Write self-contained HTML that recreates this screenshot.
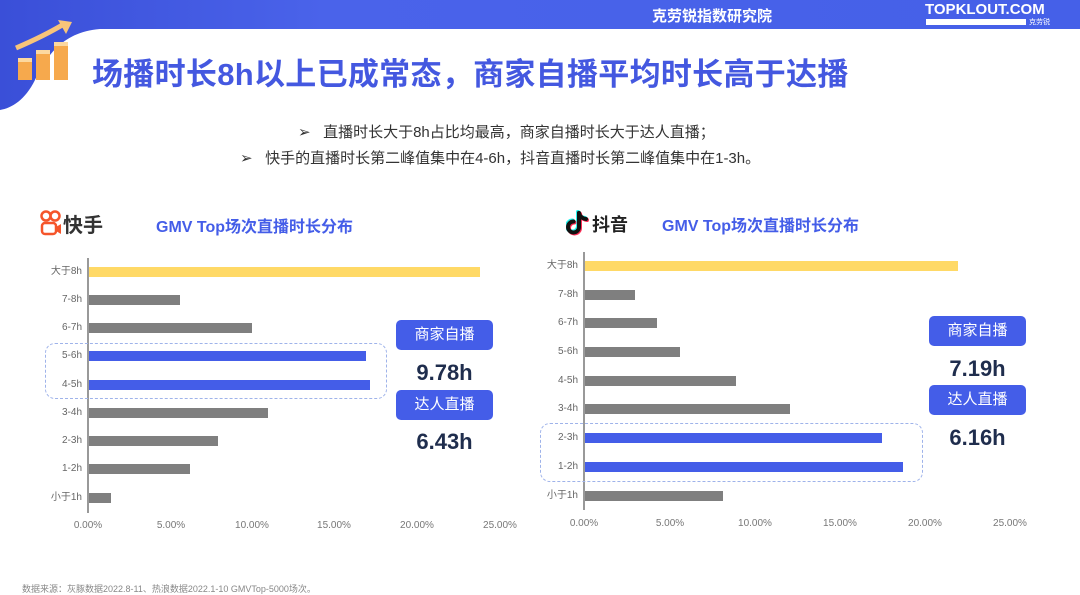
<!DOCTYPE html>
<html><head><meta charset="utf-8">
<style>
*{margin:0;padding:0;box-sizing:border-box}
body{width:1080px;height:594px;position:relative;overflow:hidden;background:#fff;font-family:"Liberation Sans","Noto Sans CJK SC",sans-serif}
.a{position:absolute}
.lbl{position:absolute;font-size:10px;color:#666;text-align:right;width:60px;line-height:12px}
.bar{position:absolute;height:10px}
.g{background:#7f7f7f}.y{background:#ffd966}.b{background:#445de8}
.tick{position:absolute;font-size:10px;color:#777;width:60px;text-align:center}
.btn{position:absolute;width:97px;height:30px;background:#445de8;border-radius:5px;color:#fff;font-size:15px;text-align:center;line-height:30px}
.num{position:absolute;width:97px;text-align:center;font-size:22px;font-weight:bold;color:#1f2d4d}
.dash{position:absolute;border:1.5px dashed #9fb3ea;border-radius:10px}
.ct{position:absolute;font-size:16px;font-weight:bold;color:#445de8}
</style></head><body>
<svg class="a" style="left:0;top:0" width="1080" height="120">
<defs><linearGradient id="gr" x1="0" y1="0" x2="1" y2="0"><stop offset="0" stop-color="#3a4fd8"/><stop offset="0.3" stop-color="#4a63ea"/><stop offset="1" stop-color="#4560e8"/></linearGradient></defs>
<path d="M0 0H1080V29H100C60 32 45 60 35 80C25 100 12 108 0 110Z" fill="url(#gr)"/>
</svg>
<div class="a" style="left:652px;top:5px;color:#fff;font-weight:bold;font-size:15px">克劳锐指数研究院</div>
<div class="a" style="left:925px;top:1px;color:#fff;font-weight:bold;font-size:15px">TOPKLOUT.COM</div>
<div class="a" style="left:926px;top:19px;width:100px;height:6px;background:#fff"></div>
<div class="a" style="left:1029px;top:17px;color:#fff;font-size:7px">克劳锐</div>
<svg class="a" style="left:14px;top:18px" width="60" height="64">
<path d="M2 30 Q30 18 50 6" stroke="#f8c47a" stroke-width="5" fill="none"/>
<path d="M44 2 L58 4 L52 16Z" fill="#f8c47a"/>
<rect x="4" y="42" width="14" height="20" fill="#f6a94d"/>
<rect x="22" y="34" width="14" height="28" fill="#f6a94d"/>
<rect x="40" y="26" width="14" height="36" fill="#f6a94d"/>
<rect x="4" y="40" width="14" height="4" fill="#fcd8a0"/><rect x="22" y="32" width="14" height="4" fill="#fcd8a0"/><rect x="40" y="24" width="14" height="4" fill="#fcd8a0"/>
</svg>
<div class="a" style="left:92px;top:49px;font-size:31px;font-weight:bold;color:#4458e0;letter-spacing:0.3px">场播时长8h以上已成常态，商家自播平均时长高于达播</div>
<div class="a" style="left:298px;top:121px;font-size:15px;color:#333">➢&nbsp;&nbsp; 直播时长大于8h占比均最高，商家自播时长大于达人直播；</div>
<div class="a" style="left:240px;top:147px;font-size:15px;color:#333">➢&nbsp;&nbsp; 快手的直播时长第二峰值集中在4-6h，抖音直播时长第二峰值集中在1-3h。</div>

<svg class="a" style="left:40px;top:210px" width="22" height="26"><circle cx="6" cy="6" r="4.5" stroke="#f5552b" stroke-width="2.5" fill="none"/><circle cx="15" cy="6" r="4.5" stroke="#f5552b" stroke-width="2.5" fill="none"/><rect x="2" y="13" width="14" height="11" rx="3" stroke="#f5552b" stroke-width="2.5" fill="none"/><path d="M16 17 L21 14 V24 L16 21" fill="#f5552b"/></svg>
<div class="a" style="left:63px;top:209px;font-size:20px;color:#333;font-weight:bold">快手</div>
<div class="ct" style="left:156px;top:213px">GMV Top场次直播时长分布</div>

<svg class="a" style="left:566px;top:210px" width="24" height="26">
<g fill="none" stroke-width="4" stroke-linecap="round">
<path d="M13 3 V17 A5.5 5.5 0 1 1 7.5 11.5" stroke="#25f4ee" transform="translate(-1,-1)"/>
<path d="M13 3 Q14 8 20 9" stroke="#25f4ee" transform="translate(-1,-1)"/>
<path d="M13 3 V17 A5.5 5.5 0 1 1 7.5 11.5" stroke="#fe2c55" transform="translate(1,1)"/>
<path d="M13 3 Q14 8 20 9" stroke="#fe2c55" transform="translate(1,1)"/>
<path d="M13 3 V17 A5.5 5.5 0 1 1 7.5 11.5" stroke="#111"/>
<path d="M13 3 Q14 8 20 9" stroke="#111"/>
</g></svg>
<div class="a" style="left:592px;top:211px;font-size:18px;color:#222;font-weight:bold">抖音</div>
<div class="ct" style="left:662px;top:212px">GMV Top场次直播时长分布</div>

<div class="a" style="left:87px;top:258px;width:2px;height:255px;background:#999"></div>
<div class="lbl" style="left:22px;top:266px">大于8h</div><div class="bar y" style="left:89px;top:267px;width:391px"></div>
<div class="lbl" style="left:22px;top:294px">7-8h</div><div class="bar g" style="left:89px;top:295px;width:91px"></div>
<div class="lbl" style="left:22px;top:322px">6-7h</div><div class="bar g" style="left:89px;top:323px;width:163px"></div>
<div class="lbl" style="left:22px;top:350px">5-6h</div><div class="bar b" style="left:89px;top:351px;width:277px"></div>
<div class="lbl" style="left:22px;top:379px">4-5h</div><div class="bar b" style="left:89px;top:380px;width:281px"></div>
<div class="lbl" style="left:22px;top:407px">3-4h</div><div class="bar g" style="left:89px;top:408px;width:179px"></div>
<div class="lbl" style="left:22px;top:435px">2-3h</div><div class="bar g" style="left:89px;top:436px;width:129px"></div>
<div class="lbl" style="left:22px;top:463px">1-2h</div><div class="bar g" style="left:89px;top:464px;width:101px"></div>
<div class="lbl" style="left:22px;top:492px">小于1h</div><div class="bar g" style="left:89px;top:493px;width:22px"></div>
<div class="tick" style="left:58px;top:520px">0.00%</div><div class="tick" style="left:141px;top:520px">5.00%</div><div class="tick" style="left:222px;top:520px">10.00%</div><div class="tick" style="left:304px;top:520px">15.00%</div><div class="tick" style="left:387px;top:520px">20.00%</div><div class="tick" style="left:470px;top:520px">25.00%</div>
<div class="dash" style="left:45px;top:343px;width:342px;height:56px"></div>
<div class="btn" style="left:396px;top:320px">商家自播</div>
<div class="num" style="left:396px;top:360px">9.78h</div>
<div class="btn" style="left:396px;top:390px">达人直播</div>
<div class="num" style="left:396px;top:429px">6.43h</div>

<div class="a" style="left:583px;top:252px;width:2px;height:258px;background:#999"></div>
<div class="lbl" style="left:518px;top:260px">大于8h</div><div class="bar y" style="left:585px;top:261px;width:373px"></div>
<div class="lbl" style="left:518px;top:289px">7-8h</div><div class="bar g" style="left:585px;top:290px;width:50px"></div>
<div class="lbl" style="left:518px;top:317px">6-7h</div><div class="bar g" style="left:585px;top:318px;width:72px"></div>
<div class="lbl" style="left:518px;top:346px">5-6h</div><div class="bar g" style="left:585px;top:347px;width:95px"></div>
<div class="lbl" style="left:518px;top:375px">4-5h</div><div class="bar g" style="left:585px;top:376px;width:151px"></div>
<div class="lbl" style="left:518px;top:403px">3-4h</div><div class="bar g" style="left:585px;top:404px;width:205px"></div>
<div class="lbl" style="left:518px;top:432px">2-3h</div><div class="bar b" style="left:585px;top:433px;width:297px"></div>
<div class="lbl" style="left:518px;top:461px">1-2h</div><div class="bar b" style="left:585px;top:462px;width:318px"></div>
<div class="lbl" style="left:518px;top:490px">小于1h</div><div class="bar g" style="left:585px;top:491px;width:138px"></div>
<div class="tick" style="left:554px;top:518px">0.00%</div><div class="tick" style="left:640px;top:518px">5.00%</div><div class="tick" style="left:725px;top:518px">10.00%</div><div class="tick" style="left:810px;top:518px">15.00%</div><div class="tick" style="left:895px;top:518px">20.00%</div><div class="tick" style="left:980px;top:518px">25.00%</div>
<div class="dash" style="left:540px;top:423px;width:383px;height:59px"></div>
<div class="btn" style="left:929px;top:316px">商家自播</div>
<div class="num" style="left:929px;top:356px">7.19h</div>
<div class="btn" style="left:929px;top:385px">达人直播</div>
<div class="num" style="left:929px;top:425px">6.16h</div>

<div class="a" style="left:22px;top:582px;font-size:9px;color:#888">数据来源：灰豚数据2022.8-11、热浪数据2022.1-10 GMVTop-5000场次。</div>
</body></html>
